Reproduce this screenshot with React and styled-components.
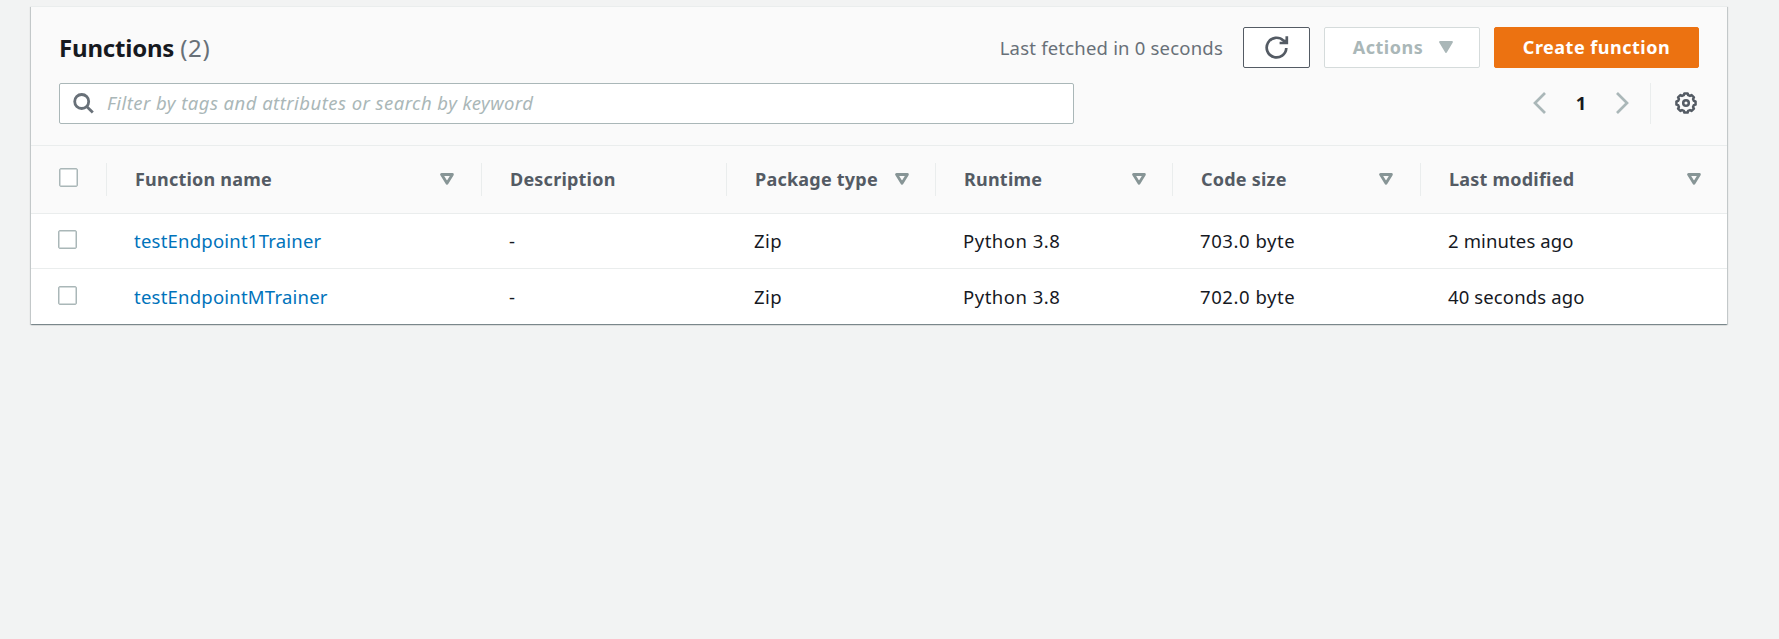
import React from "react";
import styled, { createGlobalStyle } from "styled-components";

const GlobalStyle = createGlobalStyle`
  * { box-sizing: border-box; }
  body {
    margin: 0;
    background: #f2f3f3;
    color: #16191f;
    font-family: "Noto Sans", "Open Sans", sans-serif;
    font-size: 18.5px;
    line-height: 28px;
    overflow: hidden;
  }
`;

const Page = styled.main`
  padding: 7px 52px 0 31px;
  min-height: 639px;
`;

const Card = styled.section`
  background: #fff;
  border-top: 1px solid #eaeded;
  box-shadow: 0 1px 1px 0 rgba(0, 28, 36, 0.3), 1px 1px 1px 0 rgba(0, 28, 36, 0.15),
    -1px 1px 1px 0 rgba(0, 28, 36, 0.15);
  height: 318px;
  margin-top: -1px;
`;

const CardHeader = styled.header`
  background: #fafafa;
  border-bottom: 1px solid #eaeded;
  height: 139px;
  padding: 20px 28px 0 28px;
`;

const TitleRow = styled.div`
  display: flex;
  align-items: center;
  height: 41px;
`;

const Title = styled.h2`
  margin: 0 auto 0 0;
  font-size: 24px;
  line-height: 30px;
  font-weight: 700;
  letter-spacing: -0.2px;
`;

const Count = styled.span`
  color: #687078;
  font-weight: 400;
  letter-spacing: 0.6px;
`;

const Fetched = styled.span`
  color: #687078;
  letter-spacing: 0.2px;
  margin-right: 20px;
`;

const Button = styled.button`
  display: flex;
  align-items: center;
  justify-content: center;
  gap: 16px;
  width: ${(p) => p.$width}px;
  height: 41px;
  margin: 0 0 0 ${(p) => p.$gap || 0}px;
  padding: 0 0 2px ${(p) => p.$start || 0}px;
  border: 1px solid ${(p) => (p.$primary ? "#ec7211" : p.disabled ? "#d5dbdb" : "#545b64")};
  border-radius: 2px;
  background: ${(p) => (p.$primary ? "#ec7211" : "#fff")};
  color: ${(p) => (p.$primary ? "#fff" : p.disabled ? "#aab7b8" : "#545b64")};
  font: 700 18px/26px "Noto Sans", "Open Sans", sans-serif;
  letter-spacing: 0.5px;
`;

const ToolRow = styled.div`
  display: flex;
  align-items: center;
  height: 41px;
  margin-top: 15px;
`;

const Search = styled.label`
  display: flex;
  align-items: center;
  gap: 13px;
  width: 1015px;
  height: 41px;
  padding-left: 13px;
  margin-right: auto;
  border: 1px solid #aab7b8;
  border-radius: 2px;
  background: #fff;
`;

const SearchInput = styled.input`
  flex: 1;
  border: 0;
  padding: 0 0 2px;
  outline: 0;
  background: transparent;
  font: 400 18.5px/28px "Noto Sans", "Open Sans", sans-serif;
  &::placeholder {
    color: #aab7b8;
    opacity: 1;
    font-style: italic;
    letter-spacing: 0.45px;
  }
`;

const Pager = styled.nav`
  display: flex;
  align-items: center;
  justify-content: space-between;
  width: 96px;
  font-weight: 700;
  padding-bottom: 2px;
  margin-right: 21px;
`;

const Settings = styled.div`
  display: flex;
  align-items: center;
  justify-content: flex-end;
  width: 49px;
  height: 41px;
  padding: 0 2px 1px 0;
  border-left: 1px solid #eaeded;
`;

const Table = styled.table`
  width: 1696px;
  table-layout: fixed;
  border-collapse: separate;
  border-spacing: 0;
`;

const Col = styled.col`
  width: ${(p) => p.$w}px;
`;

const HeadCell = styled.th`
  height: 68px;
  padding: 0;
  background: #fafafa;
  border-bottom: 1px solid #eaeded;
  text-align: left;
  font-size: 18px;
`;

const HeadInner = styled.div`
  display: flex;
  align-items: center;
  justify-content: space-between;
  height: 33px;
  padding: 0 ${(p) => p.$end ?? 26}px 2px 28px;
  border-left: ${(p) => (p.$first ? "0" : "1px solid #eaeded")};
  color: #545b64;
  letter-spacing: 0.22px;
  white-space: nowrap;
`;

const Cell = styled.td`
  height: ${(p) => (p.$last ? 56 : 55)}px;
  padding: 0 0 1px 28px;
  border-bottom: ${(p) => (p.$last ? "0" : "1px solid #eaeded")};
  letter-spacing: ${(p) => p.$tracking ?? 0}px;
  white-space: nowrap;
`;

const Link = styled.a`
  color: #0073bb;
`;

const Checkbox = styled.span`
  display: block;
  width: 19px;
  height: 19px;
  margin: -2px 0 0 ${(p) => (p.$row ? -1 : 0)}px;
  border: 1px solid #aab7b8;
  border-radius: 2px;
  background: #fff;
  box-shadow: inset 0 0 0 0.5px #aab7b8;
`;

const SearchIcon = () => (
  <svg width="21" height="21" viewBox="0 0 21 21" fill="none" stroke="#687078" strokeWidth="2.8">
    <circle cx="8.7" cy="8.5" r="7" />
    <path d="M13.7 13.5L19.8 19.5" />
  </svg>
);

const RefreshIcon = () => (
  <svg width="24" height="24" viewBox="0 0 24 24" fill="none" stroke="#545b64" strokeWidth="2.7">
    <path d="M21.3 13A9.8 9.8 0 1 1 18.4 5.6L20.5 7.5" />
    <path d="M21.8 1.2V8H14.6" />
    <path d="M17.5 4.8L21 8V4.8Z" fill="#545b64" stroke="none" />
  </svg>
);

const SortIcon = () => (
  <svg width="14" height="12" viewBox="0 0 14 12" fill="none" stroke="#879596" strokeWidth="2.8" strokeLinejoin="round">
    <path d="M1.6 1.5H12.4L7 10.2Z" />
  </svg>
);

const CaretIcon = () => (
  <svg width="14" height="12" viewBox="0 0 14 12">
    <path d="M1 1H13L7 11Z" fill="#aab7b8" stroke="#aab7b8" strokeWidth="1.8" strokeLinejoin="round" />
  </svg>
);

const Chevron = ({ right }) => (
  <svg width="13" height="22" viewBox="0 0 13 22" fill="none" stroke="#aab7b8" strokeWidth="2.7">
    <path d={right ? "M1 1L11 11L1 21" : "M12 1L2 11L12 21"} />
  </svg>
);

const gearPath = (() => {
  const teeth = 8;
  const points = [];
  for (let i = 0; i < teeth; i++) {
    const mid = (i * 2 * Math.PI) / teeth;
    [[-0.27, 8.1], [-0.17, 9.7], [0.17, 9.7], [0.27, 8.1]].forEach(([a, r]) =>
      points.push(`${(11 + r * Math.sin(mid + a)).toFixed(2)} ${(11 - r * Math.cos(mid + a)).toFixed(2)}`)
    );
  }
  return `M${points.join("L")}Z`;
})();

const GearIcon = () => (
  <svg width="22" height="22" viewBox="0 0 22 22" fill="none" stroke="#545b64" strokeWidth="2.5" strokeLinejoin="round">
    <path d={gearPath} />
    <circle cx="11" cy="11" r="2.8" />
  </svg>
);

const columns = [
  { label: "Function name", width: 375, sort: true, end: 27 },
  { label: "Description", width: 245 },
  { label: "Package type", width: 209, sort: true },
  { label: "Runtime", width: 237, sort: true },
  { label: "Code size", width: 248, sort: true, end: 27 },
  { label: "Last modified", width: 307, sort: true },
];

const tracking = [0.22, 0.3, 0.5, 0.5, 0.55, 0.12];

const rows = [
  ["testEndpoint1Trainer", "-", "Zip", "Python 3.8", "703.0 byte", "2 minutes ago"],
  ["testEndpointMTrainer", "-", "Zip", "Python 3.8", "702.0 byte", "40 seconds ago"],
];

export default function App() {
  return (
    <Page>
      <GlobalStyle />
      <Card>
        <CardHeader>
          <TitleRow>
            <Title>
              Functions <Count>(2)</Count>
            </Title>
            <Fetched>Last fetched in 0 seconds</Fetched>
            <Button $width={67} aria-label="Refresh">
              <RefreshIcon />
            </Button>
            <Button $width={156} $gap={14} $start={2} disabled>
              Actions
              <CaretIcon />
            </Button>
            <Button $width={205} $gap={14} $primary>
              Create function
            </Button>
          </TitleRow>
          <ToolRow>
            <Search>
              <SearchIcon />
              <SearchInput placeholder="Filter by tags and attributes or search by keyword" />
            </Search>
            <Pager>
              <Chevron />
              <span>1</span>
              <Chevron right />
            </Pager>
            <Settings>
              <GearIcon />
            </Settings>
          </ToolRow>
        </CardHeader>
        <Table>
          <colgroup>
            <Col $w={75} />
            {columns.map((c) => (
              <Col key={c.label} $w={c.width} />
            ))}
          </colgroup>
          <thead>
            <tr>
              <HeadCell>
                <HeadInner $first>
                  <Checkbox />
                </HeadInner>
              </HeadCell>
              {columns.map((c) => (
                <HeadCell key={c.label}>
                  <HeadInner $end={c.end}>
                    {c.label}
                    {c.sort && <SortIcon />}
                  </HeadInner>
                </HeadCell>
              ))}
            </tr>
          </thead>
          <tbody>
            {rows.map((row, r) => (
              <tr key={row[0]}>
                <Cell $last={r === 1}>
                  <Checkbox $row />
                </Cell>
                {row.map((value, i) => (
                  <Cell key={i} $last={r === 1} $tracking={tracking[i]}>
                    {i === 0 ? <Link>{value}</Link> : value}
                  </Cell>
                ))}
              </tr>
            ))}
          </tbody>
        </Table>
      </Card>
    </Page>
  );
}
